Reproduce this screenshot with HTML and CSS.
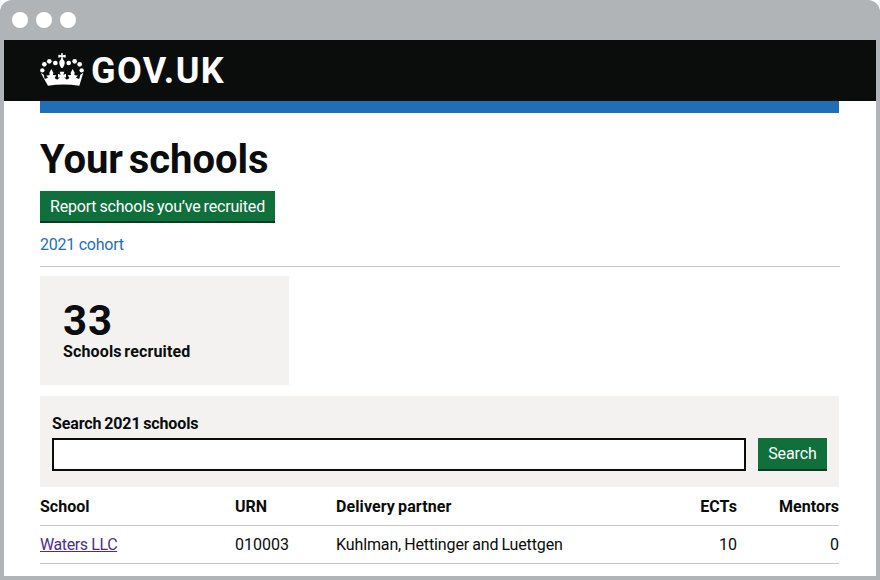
FILE: index.html
```html
<!DOCTYPE html>
<html lang="en">
<head>
<meta charset="utf-8">
<title>Your schools</title>
<link rel="stylesheet" href="styles.css">
</head>
<body>
<div class="window">
  <div class="titlebar"><i></i><i></i><i></i></div>
  <div class="page">
    <header class="header">
      <svg class="crown" viewBox="121 158 132 99" fill="#fff" aria-hidden="true">
        <circle cx="128" cy="210" r="6.5"/><circle cx="134" cy="192" r="7"/><circle cx="149" cy="183" r="7"/><circle cx="167" cy="188" r="7"/>
        <circle cx="246" cy="210" r="6.5"/><circle cx="240" cy="192" r="7"/><circle cx="225" cy="183" r="7"/><circle cx="207" cy="188" r="7"/>
        <path d="M184 159h6l-1 6 9-2v9l-9-2 1 7q7 5 5 13-2 8-6 13h-4q-4-5-6-13-2-8 5-13l1-7-9 2v-9l9 2z"/>
        <path d="M123 217l9 6 3 12q7 1 10-4l-6-5 11-2-1-7 6-11 6 11-1 7 10 1-5 7q3 6 10 5l6-8-6 3v-12l8 4-3-10h14l-3 10 8-4v12l-6-3 6 8q7 1 10-5l-5-7 10-1-1-7 6-11 6 11-1 7 11 2-6 5q3 5 10 4l3-12 9-6-12 39q-47-7-94 0z"/>
      </svg>
      <span class="logotype">GOV.UK</span>
    </header>
    <main class="content">
      <div class="phase"></div>
      <h1>Your schools</h1>
      <button class="button report">Report schools you’ve recruited</button>
      <a class="cohort">2021 cohort</a>
      <section class="card">
        <strong>33</strong>
        <span>Schools recruited</span>
      </section>
      <form class="search">
        <label for="q">Search 2021 schools</label>
        <div class="search-row">
          <input id="q" type="text">
          <button class="button find" type="button">Search</button>
        </div>
      </form>
      <table>
        <thead>
          <tr><th class="school">School</th><th class="urn">URN</th><th class="partner">Delivery partner</th><th class="ects">ECTs</th><th class="mentors">Mentors</th></tr>
        </thead>
        <tbody>
          <tr><td><a class="visited">Waters LLC</a></td><td class="number">010003</td><td class="name">Kuhlman, Hettinger and Luettgen</td><td class="ects">10</td><td class="mentors">0</td></tr>
        </tbody>
      </table>
    </main>
  </div>
</div>
</body>
</html>
```
FILE: styles.css
```css
* { box-sizing: border-box; }
body { margin: 0; background: #fff; color: #0b0c0c; font: 16px/20px Roboto, sans-serif; }
.window { height: 580px; padding: 0 4px 4px; background: #b1b4b6; border-radius: 12px 12px 0 0; overflow: hidden; }
.titlebar { height: 40px; display: flex; align-items: center; gap: 8px; padding-left: 8px; }
.titlebar i { width: 16px; height: 16px; border-radius: 50%; background: #fff; }
.page { height: 536px; background: #fff; overflow: hidden; }
.header { height: 61px; display: flex; align-items: flex-start; padding: 13px 0 0 36px; background: #0b0c0c; }
.crown { width: 44px; height: 33px; }
.logotype { margin: -2px 0 0 7px; color: #fff; font-size: 36px; line-height: 40px; font-weight: 700; letter-spacing: 1.4px; }
.content { width: 799px; margin-left: 36px; }
.phase { height: 12px; background: #1d70b8; }
h1 { margin: 23px 0 0; font-size: 40px; line-height: 48px; font-weight: 700; letter-spacing: -0.05px; word-spacing: -4px; }
.button { display: block; height: 33px; margin: 0; padding: 0; border: 0; border-bottom: 2px solid #083d20; border-radius: 0; background: #0f703c; color: #fff; font: 16px/31px Roboto, sans-serif; text-align: center; }
.report { width: 235px; height: 32px; margin-top: 7px; letter-spacing: -0.18px; word-spacing: -0.8px; }
.cohort { display: block; width: 800px; height: 44px; padding: 12px 0 0; border-bottom: 1px solid #c4c6c8; color: #1d70b8; letter-spacing: -0.25px; }
.card { width: 249px; height: 109px; margin-top: 9px; padding: 24px 23px; background: #f3f2f1; }
.card strong { display: block; font-size: 42px; line-height: 41px; letter-spacing: 1px; }
.card span { display: block; font-weight: 700; line-height: 22px; letter-spacing: 0.15px; word-spacing: -1.5px; }
.search { height: 91px; margin-top: 11px; padding: 17px 12px 0; background: #f3f2f1; }
.search label { display: block; padding-top: 1px; line-height: 19px; font-weight: 700; letter-spacing: -0.1px; word-spacing: -1.2px; }
.search-row { display: flex; gap: 12px; margin-top: 5px; }
.search input { flex: 1; min-width: 0; height: 33px; border: 2px solid #0b0c0c; background: #fff; border-radius: 0; }
.find { width: 69px; letter-spacing: -0.1px; }
table { width: 799px; border-collapse: collapse; table-layout: fixed; }
th, td { height: 38px; padding: 2px 0 0; border-bottom: 1px solid #c4c6c8; text-align: left; font-weight: 400; }
th { font-weight: 700; }
.school { width: 195px; }
.urn { width: 101px; }
.partner { width: 320px; word-spacing: -1px; letter-spacing: 0.1px; }
.ects { width: 81px; text-align: right; }
.mentors { width: 102px; text-align: right; }
.visited { color: #4c2c92; text-decoration: underline; letter-spacing: -0.4px; }
.name { letter-spacing: -0.12px; word-spacing: -0.8px; }
```
